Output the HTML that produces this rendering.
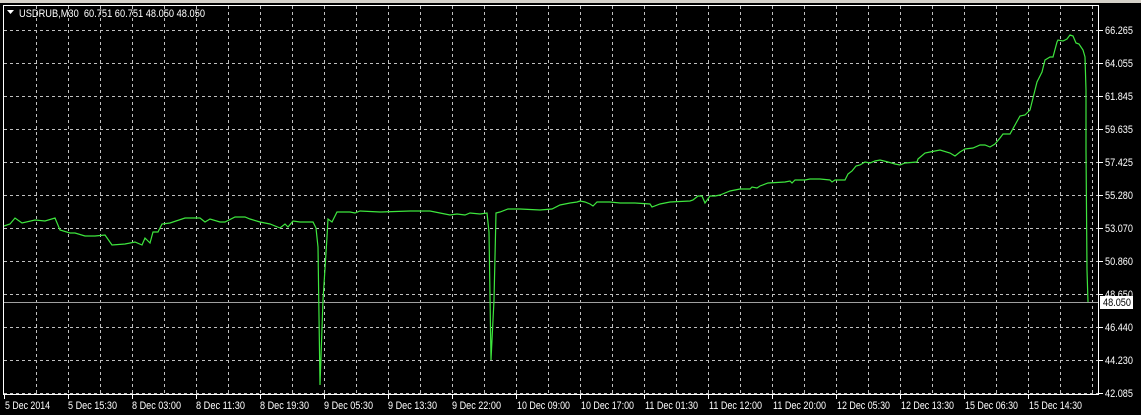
<!DOCTYPE html>
<html><head><meta charset="utf-8"><style>
html,body{margin:0;padding:0;background:#000;width:1141px;height:415px;overflow:hidden}
svg text{font-family:"Liberation Sans",sans-serif;font-size:11px;fill:#fff}
</style></head><body>
<svg width="1141" height="415" viewBox="0 0 1141 415" xmlns="http://www.w3.org/2000/svg">
<rect width="1141" height="415" fill="#000"/>
<rect x="0" y="0" width="1141" height="3" fill="#d4d0c8"/>
<g stroke="#c0c0c0" stroke-width="1" stroke-dasharray="3,3">
<path d="M4 30.5H1099M4 63.5H1099M4 96.5H1099M4 129.5H1099M4 162.5H1099M4 195.5H1099M4 228.5H1099M4 261.5H1099M4 294.5H1099M4 327.5H1099M4 360.5H1099M4 393.5H1099"/>
<path d="M36.5 6V394M68.5 6V394M100.5 6V394M132.5 6V394M164.5 6V394M196.5 6V394M228.5 6V394M260.5 6V394M292.5 6V394M324.5 6V394M356.5 6V394M388.5 6V394M420.5 6V394M452.5 6V394M484.5 6V394M516.5 6V394M548.5 6V394M580.5 6V394M612.5 6V394M644.5 6V394M676.5 6V394M708.5 6V394M740.5 6V394M772.5 6V394M804.5 6V394M836.5 6V394M868.5 6V394M900.5 6V394M932.5 6V394M964.5 6V394M996.5 6V394M1028.5 6V394M1060.5 6V394M1092.5 6V394"/>
</g>
<line x1="4" y1="302.5" x2="1099" y2="302.5" stroke="#a0a0a0"/>
<rect x="3.5" y="5.5" width="1095" height="389" fill="none" stroke="#fff"/>
<polyline fill="none" stroke="#3ee63e" stroke-width="1.2" points="4,226 10,224 15,218 22,223 35,220 45,221 55,218 60,230 70,233 75,233 85,236 95,236 105,235 112,245 125,244 135,242 142,245 145,238 150,243 153,232 158,232 162,224 170,223 185,218 200,218 205,222 210,219 220,222 225,222 235,217 245,217 250,219 260,222 270,224 280,228 285,224 288,227 293,221 300,222 313,222 316,228 318,247 320,385 323,300 327,237 328,219 332,222 337,212 350,212 355,213 360,211 380,212 410,211 430,211 440,213 450,215 457,214 465,215 470,213 480,214 487,213 489,232 491,360 494,300 496,213 500,212 508,209 520,209 540,210 552,209 560,205 570,203 577,202 580,201 585,202 590,204 593,206 597,202 610,202 620,203 635,203 650,204 652,207 660,204 670,202 690,201 693,200 698,196 702,196 705,203 710,196 715,196 720,195 725,193 730,191 740,189 750,189 752,187 757,188 760,186 768,183 785,182 790,181 792,183 795,180 805,180 810,179 820,179 830,180 832,182 835,180 845,180 848,174 852,171 856,166 860,165 865,162 870,163 875,161 880,160 888,162 895,164 900,165 905,163 917,162 918,159 925,153 930,152 940,150 950,153 955,156 960,152 965,149 973,148 980,145 985,145 990,147 995,144 1000,138 1003,134 1010,134 1015,125 1020,116 1025,115 1030,110 1037,82 1042,72 1045,60 1050,57 1053,57 1057,42 1058,40 1063,41 1067,39 1070,35 1073,36 1076,43 1079,44 1083,50 1085,57 1086,90 1086,150 1087,270 1088,302"/>
<path d="M7 10h7l-3.5 4z" fill="#fff"/>
<text x="19" y="17" textLength="186" lengthAdjust="spacingAndGlyphs" xml:space="preserve">USDRUB,M30  60.751 60.751 48.050 48.050</text>
<g stroke="#fff"><path d="M1099 30.5h4M1099 63.5h4M1099 96.5h4M1099 129.5h4M1099 162.5h4M1099 195.5h4M1099 228.5h4M1099 261.5h4M1099 294.5h4M1099 327.5h4M1099 360.5h4M1099 393.5h4"/></g>
<g>
<text x="1105" y="34" textLength="28" lengthAdjust="spacingAndGlyphs">66.265</text><text x="1105" y="67" textLength="28" lengthAdjust="spacingAndGlyphs">64.055</text><text x="1105" y="100" textLength="28" lengthAdjust="spacingAndGlyphs">61.845</text><text x="1105" y="133" textLength="28" lengthAdjust="spacingAndGlyphs">59.635</text><text x="1105" y="166" textLength="28" lengthAdjust="spacingAndGlyphs">57.425</text><text x="1105" y="199" textLength="28" lengthAdjust="spacingAndGlyphs">55.280</text><text x="1105" y="232" textLength="28" lengthAdjust="spacingAndGlyphs">53.070</text><text x="1105" y="265" textLength="28" lengthAdjust="spacingAndGlyphs">50.860</text><text x="1105" y="298" textLength="28" lengthAdjust="spacingAndGlyphs">48.650</text><text x="1105" y="331" textLength="28" lengthAdjust="spacingAndGlyphs">46.440</text><text x="1105" y="364" textLength="28" lengthAdjust="spacingAndGlyphs">44.230</text><text x="1105" y="397" textLength="28" lengthAdjust="spacingAndGlyphs">42.085</text>
</g>
<rect x="1100" y="296" width="33" height="13" fill="#fff"/>
<text x="1103" y="306" textLength="28" lengthAdjust="spacingAndGlyphs" style="fill:#000">48.050</text>
<g stroke="#fff"><path d="M4.5 395v4M68.5 395v4M132.5 395v4M196.5 395v4M260.5 395v4M324.5 395v4M388.5 395v4M452.5 395v4M516.5 395v4M580.5 395v4M644.5 395v4M708.5 395v4M772.5 395v4M836.5 395v4M900.5 395v4M964.5 395v4M1028.5 395v4"/></g>
<g>
<text x="5" y="409" textLength="45" lengthAdjust="spacingAndGlyphs">5 Dec 2014</text>
<text x="68" y="409" textLength="49" lengthAdjust="spacingAndGlyphs">5 Dec 15:30</text>
<text x="132" y="409" textLength="49" lengthAdjust="spacingAndGlyphs">8 Dec 03:00</text>
<text x="196" y="409" textLength="49" lengthAdjust="spacingAndGlyphs">8 Dec 11:30</text>
<text x="260" y="409" textLength="49" lengthAdjust="spacingAndGlyphs">8 Dec 19:30</text>
<text x="324" y="409" textLength="49" lengthAdjust="spacingAndGlyphs">9 Dec 05:30</text>
<text x="388" y="409" textLength="49" lengthAdjust="spacingAndGlyphs">9 Dec 13:30</text>
<text x="452" y="409" textLength="49" lengthAdjust="spacingAndGlyphs">9 Dec 22:00</text>
<text x="517" y="409" textLength="53" lengthAdjust="spacingAndGlyphs">10 Dec 09:00</text>
<text x="581" y="409" textLength="53" lengthAdjust="spacingAndGlyphs">10 Dec 17:00</text>
<text x="645" y="409" textLength="53" lengthAdjust="spacingAndGlyphs">11 Dec 01:30</text>
<text x="709" y="409" textLength="53" lengthAdjust="spacingAndGlyphs">11 Dec 12:00</text>
<text x="773" y="409" textLength="53" lengthAdjust="spacingAndGlyphs">11 Dec 20:00</text>
<text x="837" y="409" textLength="53" lengthAdjust="spacingAndGlyphs">12 Dec 05:30</text>
<text x="901" y="409" textLength="53" lengthAdjust="spacingAndGlyphs">12 Dec 13:30</text>
<text x="965" y="409" textLength="53" lengthAdjust="spacingAndGlyphs">15 Dec 06:30</text>
<text x="1029" y="409" textLength="53" lengthAdjust="spacingAndGlyphs">15 Dec 14:30</text>
</g>
</svg>
</body></html>
